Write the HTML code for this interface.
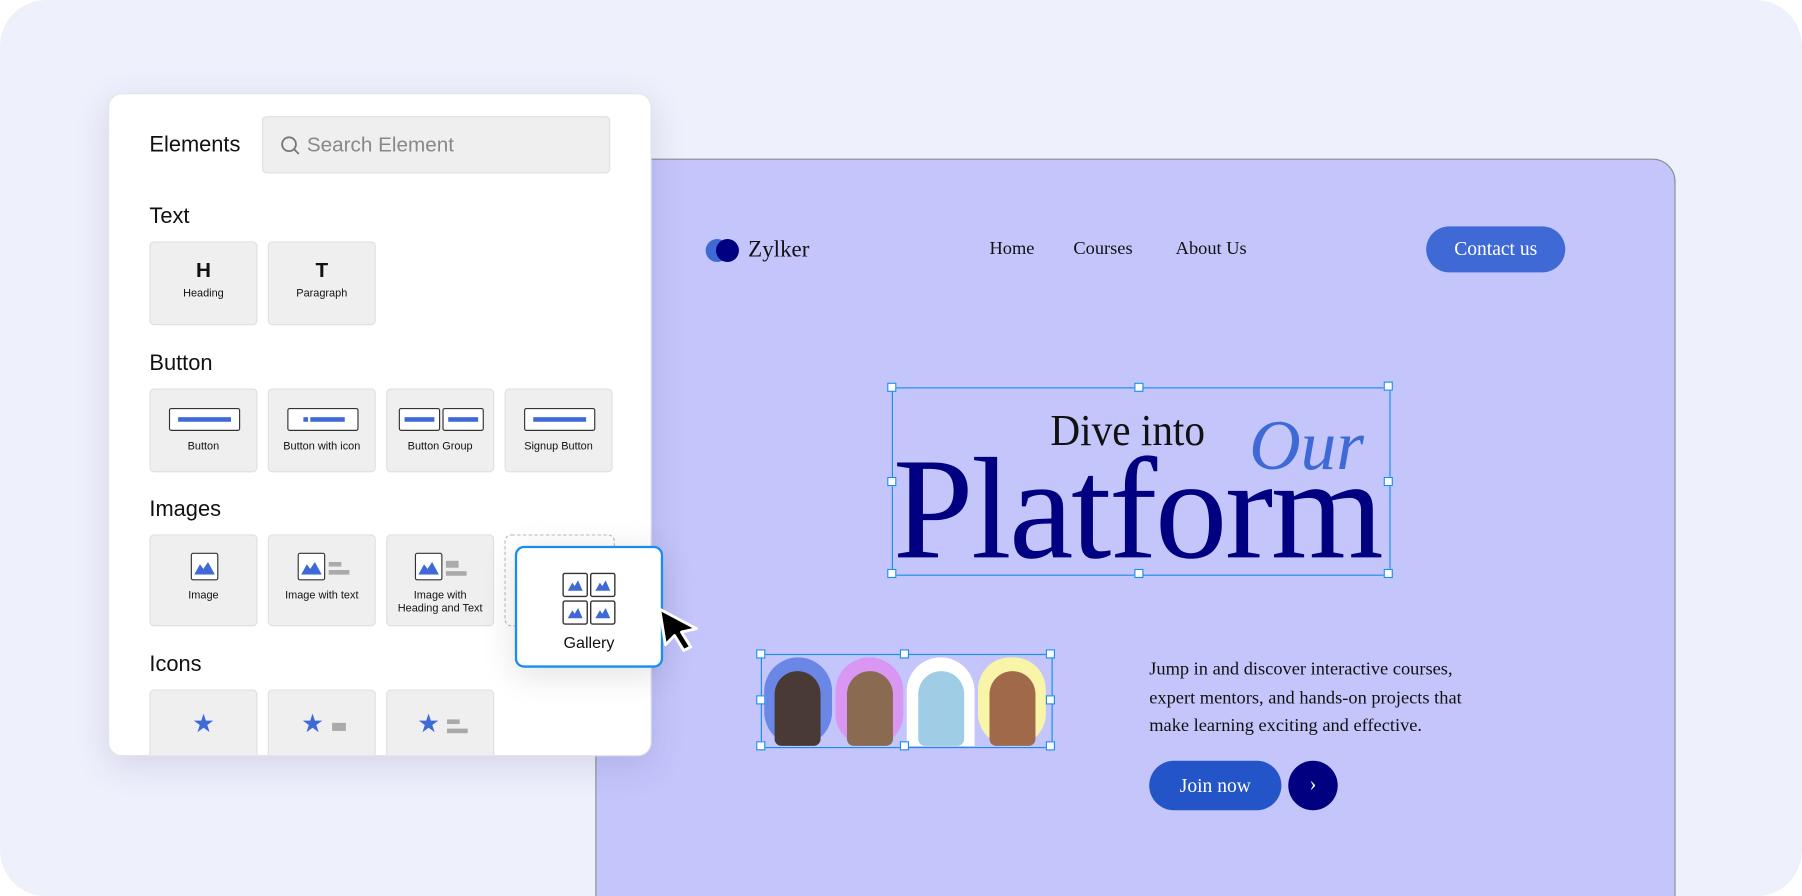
<!DOCTYPE html>
<html><head><style>
body{margin:0;width:1802px;height:896px;overflow:hidden;background:#fff}
#w{position:absolute;left:0;top:0;width:1568px;height:780px;transform:scale(1.14923);transform-origin:0 0;font-family:"Liberation Sans",sans-serif;overflow:hidden;border-radius:40px}
.bg{position:absolute;left:0;top:0;width:1568px;height:780px;background:#eef0fc;border-radius:40px}
.site{position:absolute;left:518px;top:138px;width:938px;height:641px;background:#c4c5fb;border:1px solid #8a8f8a;border-radius:0 20px 0 0;font-family:"Liberation Serif",serif}
.panel{position:absolute;left:94px;top:81px;width:471px;height:575px;background:#fff;border-radius:12px;box-shadow:0 8px 30px rgba(60,60,120,.15);border:1px solid #e4e4ec;overflow:hidden}
.h{position:absolute;left:35px;font-size:19px;color:#111}
.t{position:absolute;width:94px;background:#efefef;border:1px solid #e0e0e0;border-radius:4px;box-sizing:border-box;font-size:9.5px;text-align:center;color:#111}
.t .l{position:absolute;left:0;right:0}
.a{position:absolute;background:#fff;border:1px solid #333;border-radius:2px;box-sizing:border-box}
.bar{position:absolute;background:#3f6ad6;height:4px}
.g{position:absolute;background:#aaa;height:4px}
.sel{position:absolute;border:1px solid #1a8cf0}
.hd{position:absolute;width:8px;height:8px;background:#fff;border:1px solid #1a8cf0;box-sizing:border-box}
</style></head><body><div id="w">
<div class="bg"></div>
<div class="site">
 <div style="position:absolute;left:95px;top:69px;width:20px;height:20px;border-radius:50%;background:#3f6ad6"></div>
 <div style="position:absolute;left:104px;top:69px;width:20px;height:20px;border-radius:50%;background:#000080"></div>
 <div style="position:absolute;left:132px;top:67px;font-size:20px;color:#111">Zylker</div>
 <div style="position:absolute;left:342px;top:69px;font-size:16px;color:#111">Home</div>
 <div style="position:absolute;left:415px;top:69px;font-size:16px;color:#111">Courses</div>
 <div style="position:absolute;left:504px;top:69px;font-size:16px;color:#111">About Us</div>
 <div style="position:absolute;left:722px;top:58px;width:121px;height:40px;border-radius:20px;background:#3f6ad6;color:#fff;font-size:17px;line-height:40px;text-align:center">Contact us</div>
 <div class="sel" style="left:257px;top:198px;width:432px;height:162px"></div>
 <div class="hd" style="left:253px;top:194px"></div><div class="hd" style="left:468px;top:194px"></div><div class="hd" style="left:685px;top:193px"></div>
 <div class="hd" style="left:253px;top:276px"></div><div class="hd" style="left:685px;top:276px"></div>
 <div class="hd" style="left:253px;top:356px"></div><div class="hd" style="left:468px;top:356px"></div><div class="hd" style="left:685px;top:356px"></div>
 <div style="position:absolute;left:395px;top:213px;font-size:39px;color:#111;transform:scaleX(.92);transform-origin:0 0">Dive into</div>
 <div style="position:absolute;left:568px;top:214px;font-size:62px;font-style:italic;color:#3f6ad6;font-family:'Liberation Serif',serif">Our</div>
 <div style="position:absolute;left:258px;top:240px;font-size:126px;line-height:130px;color:#000080;letter-spacing:-2px">Platform</div>
 <div class="sel" style="left:143px;top:430px;width:252px;height:80px"></div>
 <div style="position:absolute;left:146px;top:433px;width:59px;height:77px;border-radius:30px;background:#6a87e6"></div>
 <div style="position:absolute;left:208px;top:433px;width:59px;height:77px;border-radius:30px 30px 28px 28px;background:#d996f3"></div>
 <div style="position:absolute;left:270px;top:433px;width:59px;height:77px;border-radius:30px 30px 0 0;background:#fff"></div>
 <div style="position:absolute;left:332px;top:433px;width:59px;height:77px;border-radius:28px;background:#f8f5a8"></div>
 <div style="position:absolute;left:155px;top:445px;width:40px;height:65px;border-radius:20px 20px 6px 6px;background:#4a3a36"></div>
 <div style="position:absolute;left:218px;top:445px;width:40px;height:65px;border-radius:20px 20px 6px 6px;background:#8a6a50"></div>
 <div style="position:absolute;left:280px;top:445px;width:40px;height:65px;border-radius:20px 20px 6px 6px;background:#9fcde6"></div>
 <div style="position:absolute;left:342px;top:445px;width:40px;height:65px;border-radius:20px 20px 6px 6px;background:#a06a4a"></div>
 <div class="hd" style="left:139px;top:426px"></div><div class="hd" style="left:264px;top:426px"></div><div class="hd" style="left:391px;top:426px"></div>
 <div class="hd" style="left:139px;top:466px"></div><div class="hd" style="left:391px;top:466px"></div>
 <div class="hd" style="left:139px;top:506px"></div><div class="hd" style="left:264px;top:506px"></div><div class="hd" style="left:391px;top:506px"></div>
 <div style="position:absolute;left:481px;top:432px;font-size:16px;line-height:24.5px;color:#111">Jump in and discover interactive courses,<br>expert mentors, and hands-on projects that<br>make learning exciting and effective.</div>
 <div style="position:absolute;left:481px;top:523px;width:115px;height:43px;border-radius:22px;background:#2354c8;color:#fff;font-size:17px;line-height:43px;text-align:center">Join now</div>
 <div style="position:absolute;left:602px;top:523px;width:43px;height:43px;border-radius:50%;background:#000080;color:#fff;font-size:18px;line-height:41px;text-align:center">›</div>
</div>
<div class="panel">
 <div class="h" style="top:34px">Elements</div>
 <div style="position:absolute;left:133px;top:19px;width:303px;height:50px;background:#efefef;border:1px solid #e0e0e0;border-radius:4px;box-sizing:border-box">
  <svg style="position:absolute;left:15px;top:16px" width="18" height="18" viewBox="0 0 18 18"><circle cx="7.5" cy="7.5" r="6" fill="none" stroke="#777" stroke-width="1.6"/><path d="M12 12l4 4" stroke="#777" stroke-width="1.6"/></svg>
  <div style="position:absolute;left:38px;top:14px;font-size:18px;color:#888">Search Element</div></div>
 <div class="h" style="top:96px">Text</div>
 <div class="t" style="left:35px;top:128px;height:73px"><div class="l" style="top:14px;font-size:18px;font-weight:bold">H</div><div class="l" style="top:39px">Heading</div></div>
 <div class="t" style="left:138px;top:128px;height:73px"><div class="l" style="top:14px;font-size:18px;font-weight:bold">T</div><div class="l" style="top:39px">Paragraph</div></div>
 <div class="h" style="top:224px">Button</div>
 <div class="t" style="left:35px;top:256px;height:73px"><div class="a" style="left:16px;top:16px;width:62px;height:20px"></div><div class="bar" style="left:24px;top:24px;width:46px"></div><div class="l" style="top:44px">Button</div></div>
 <div class="t" style="left:138px;top:256px;height:73px"><div class="a" style="left:16px;top:16px;width:62px;height:20px"></div><div class="bar" style="left:30px;top:24px;width:4px"></div><div class="bar" style="left:36px;top:24px;width:30px"></div><div class="l" style="top:44px">Button with icon</div></div>
 <div class="t" style="left:241px;top:256px;height:73px"><div class="a" style="left:10px;top:16px;width:36px;height:20px"></div><div class="a" style="left:48px;top:16px;width:36px;height:20px"></div><div class="bar" style="left:15px;top:24px;width:26px"></div><div class="bar" style="left:53px;top:24px;width:26px"></div><div class="l" style="top:44px">Button Group</div></div>
 <div class="t" style="left:344px;top:256px;height:73px"><div class="a" style="left:16px;top:16px;width:62px;height:20px"></div><div class="bar" style="left:24px;top:24px;width:46px"></div><div class="l" style="top:44px">Signup Button</div></div>
 <div class="h" style="top:351px">Images</div>
 <div class="t" style="left:35px;top:383px;height:80px"><div class="a" style="left:35px;top:15px;width:24px;height:24px"></div><svg style="position:absolute;left:38px;top:22px" width="18" height="12" viewBox="0 0 18 12"><path d="M0 12L5 3 8 7 12 1 18 12Z" fill="#3f6ad6"/></svg><div class="l" style="top:47px">Image</div></div>
 <div class="t" style="left:138px;top:383px;height:80px"><div class="a" style="left:25px;top:15px;width:24px;height:24px"></div><svg style="position:absolute;left:28px;top:22px" width="18" height="12" viewBox="0 0 18 12"><path d="M0 12L5 3 8 7 12 1 18 12Z" fill="#3f6ad6"/></svg><div class="g" style="left:52px;top:23px;width:11px"></div><div class="g" style="left:52px;top:30px;width:18px"></div><div class="l" style="top:47px">Image with text</div></div>
 <div class="t" style="left:241px;top:383px;height:80px"><div class="a" style="left:24px;top:15px;width:24px;height:24px"></div><svg style="position:absolute;left:27px;top:22px" width="18" height="12" viewBox="0 0 18 12"><path d="M0 12L5 3 8 7 12 1 18 12Z" fill="#3f6ad6"/></svg><div class="g" style="left:51px;top:22px;width:11px;height:6px"></div><div class="g" style="left:51px;top:31px;width:18px"></div><div class="l" style="top:47px;line-height:11px">Image with<br>Heading and Text</div></div>
 <div style="position:absolute;left:344px;top:383px;width:96px;height:80px;border:1px dashed #bbb;border-radius:6px;box-sizing:border-box"></div>
 <div class="h" style="top:486px">Icons</div>
 <div class="t" style="left:35px;top:518px;height:70px"><div class="l" style="top:16px;font-size:22px;color:#3f6ad6">★</div></div>
 <div class="t" style="left:138px;top:518px;height:70px"><div style="position:absolute;left:28px;top:16px;font-size:22px;color:#3f6ad6">★</div><div class="g" style="left:55px;top:28px;width:12px;height:7px"></div></div>
 <div class="t" style="left:241px;top:518px;height:70px"><div style="position:absolute;left:26px;top:16px;font-size:22px;color:#3f6ad6">★</div><div class="g" style="left:52px;top:25px;width:11px"></div><div class="g" style="left:52px;top:33px;width:18px"></div></div>
</div>
<div style="position:absolute;left:448px;top:475px;width:129px;height:106px;background:#fff;border:2px solid #1a8cf0;border-radius:8px;box-sizing:border-box;box-shadow:0 6px 30px rgba(0,0,0,.12)">
 <svg style="position:absolute;left:39px;top:21px" width="48" height="48" viewBox="0 0 48 48">
  <g fill="#fff" stroke="#333" stroke-width="1.2"><rect x="1" y="1" width="21" height="20" rx="1.5"/><rect x="25" y="1" width="21" height="20" rx="1.5"/><rect x="1" y="25" width="21" height="20" rx="1.5"/><rect x="25" y="25" width="21" height="20" rx="1.5"/></g>
  <g fill="#3f6ad6"><path d="M5 16L9 9 11 12 14 7 18 16Z"/><path d="M29 16L33 9 35 12 38 7 42 16Z"/><path d="M5 40L9 33 11 36 14 31 18 40Z"/><path d="M29 40L33 33 35 36 38 31 42 40Z"/></g></svg>
 <div style="position:absolute;left:0;right:0;top:74px;text-align:center;font-size:14px;color:#111">Gallery</div>
</div>
<svg style="position:absolute;left:571px;top:527px" width="40" height="42" viewBox="0 0 40 42"><path d="M3 3L35 20 22 23 30 36 24 39 16 26 8 34Z" fill="#000" stroke="#fff" stroke-width="2.5" stroke-linejoin="round"/></svg>
</div></body></html>
